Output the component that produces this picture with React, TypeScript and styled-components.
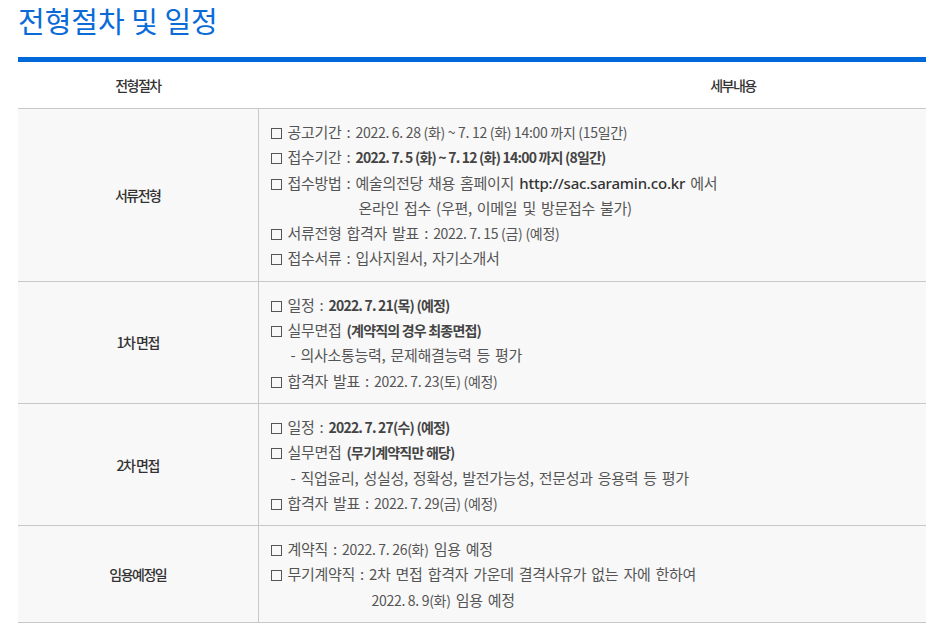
import React from "react";
import styled, { createGlobalStyle } from "styled-components";

const Global = createGlobalStyle`
  html, body { margin: 0; padding: 0; background: #fff; overflow: hidden; }
  body { font-family: "Noto Sans CJK KR", "Noto Sans", sans-serif; }
`;

const Page = styled.div`
  padding: 0 0 0 18px;
  width: 1190px;
`;

const Title = styled.h2`
  margin: 0 0 17px;
  font-size: 29px;
  line-height: 40px;
  font-weight: 400;
  color: #0a6bd8;
  letter-spacing: 0;
`;

const Table = styled.table`
  width: 1190px;
  border-collapse: collapse;
  border-top: 5px solid #0068d9;
  border-bottom: 1px solid #c8c8c8;
  table-layout: fixed;
`;

const Th = styled.th<{ $w?: number }>`
  width: ${(p) => (p.$w ? `${p.$w}px` : "auto")};
  height: 46px;
  padding: 0;
  font-size: 14px;
  font-weight: 500;
  color: #333;
  letter-spacing: -1.5px;
  text-align: center;
  background: #fff;
  border-bottom: 1px solid #c8c8c8;
`;

const Label = styled.td`
  padding: 0;
  font-size: 14px;
  font-weight: 500;
  color: #333;
  letter-spacing: -1.5px;
  text-align: center;
  vertical-align: middle;
  background: #f8f8f8;
  border-right: 1px solid #c8c8c8;
  border-bottom: 1px solid #c8c8c8;
`;

const Detail = styled.td`
  padding: 10px 0 10px 12px;
  font-size: 15px;
  line-height: 25.3px;
  color: #555;
  letter-spacing: -0.3px;
  word-spacing: 2px;
  background: #f8f8f8;
  border-bottom: 1px solid #c8c8c8;
  vertical-align: top;
`;

const Line = styled.div<{ $indent?: number }>`
  height: 25.3px;
  padding-left: ${(p) => p.$indent ?? 0}px;
  white-space: nowrap;
`;

const Box = styled.span`
  display: inline-block;
  width: 11px;
  height: 11px;
  border: 1px solid #555;
  box-sizing: border-box;
  margin-right: 6px;
  vertical-align: -1px;
`;

const Num = styled.span`
  font-size: 14px;
  line-height: 1;
  letter-spacing: -0.3px;
  word-spacing: 0;
`;

const Strong = styled.b`
  font-size: 14px;
  line-height: 1;
  font-weight: 700;
  color: #444;
  letter-spacing: -0.8px;
  word-spacing: 0;
`;

const Url = styled.span`
  font-family: "Noto Sans", "Open Sans", sans-serif;
  font-size: 15px;
  line-height: 1;
  font-weight: 500;
  color: #333;
  letter-spacing: -0.2px;
  word-spacing: 0;
`;

const B: React.FC<{ children: React.ReactNode }> = ({ children }) => (
  <Line>
    <Box />
    {children}
  </Line>
);

export default function App() {
  return (
    <>
      <Global />
      <Page>
        <Title>전형절차 및 일정</Title>
        <Table>
          <thead>
            <tr>
              <Th $w={240}>전형절차</Th>
              <Th>세부내용</Th>
            </tr>
          </thead>
          <tbody>
            <tr>
              <Label>서류전형</Label>
              <Detail>
                <B>
                  공고기간 : <Num>2022. 6. 28 (화) ~ 7. 12 (화) 14:00 까지 (15일간)</Num>
                </B>
                <B>
                  접수기간 : <Strong>2022. 7. 5 (화) ~ 7. 12 (화) 14:00 까지 (8일간)</Strong>
                </B>
                <B>
                  접수방법 : 예술의전당 채용 홈페이지 <Url>http://sac.saramin.co.kr</Url> 에서
                </B>
                <Line $indent={88}>온라인 접수 (우편, 이메일 및 방문접수 불가)</Line>
                <B>
                  서류전형 합격자 발표 : <Num>2022. 7. 15 (금) (예정)</Num>
                </B>
                <B>접수서류 : 입사지원서, 자기소개서</B>
              </Detail>
            </tr>
            <tr>
              <Label>1차 면접</Label>
              <Detail>
                <B>
                  일정 : <Strong>2022. 7. 21(목) (예정)</Strong>
                </B>
                <B>
                  실무면접 <Strong>(계약직의 경우 최종면접)</Strong>
                </B>
                <Line $indent={20}>- 의사소통능력, 문제해결능력 등 평가</Line>
                <B>
                  합격자 발표 : <Num>2022. 7. 23(토) (예정)</Num>
                </B>
              </Detail>
            </tr>
            <tr>
              <Label>2차 면접</Label>
              <Detail>
                <B>
                  일정 : <Strong>2022. 7. 27(수) (예정)</Strong>
                </B>
                <B>
                  실무면접 <Strong>(무기계약직만 해당)</Strong>
                </B>
                <Line $indent={20}>
                  - 직업윤리, 성실성, 정확성, 발전가능성, 전문성과 응용력 등 평가
                </Line>
                <B>
                  합격자 발표 : <Num>2022. 7. 29(금) (예정)</Num>
                </B>
              </Detail>
            </tr>
            <tr>
              <Label>임용예정일</Label>
              <Detail>
                <B>
                  계약직 : <Num>2022. 7. 26(화)</Num> 임용 예정
                </B>
                <B>무기계약직 : 2차 면접 합격자 가운데 결격사유가 없는 자에 한하여</B>
                <Line $indent={101}>
                  <Num>2022. 8. 9(화)</Num> 임용 예정
                </Line>
              </Detail>
            </tr>
          </tbody>
        </Table>
      </Page>
    </>
  );
}
